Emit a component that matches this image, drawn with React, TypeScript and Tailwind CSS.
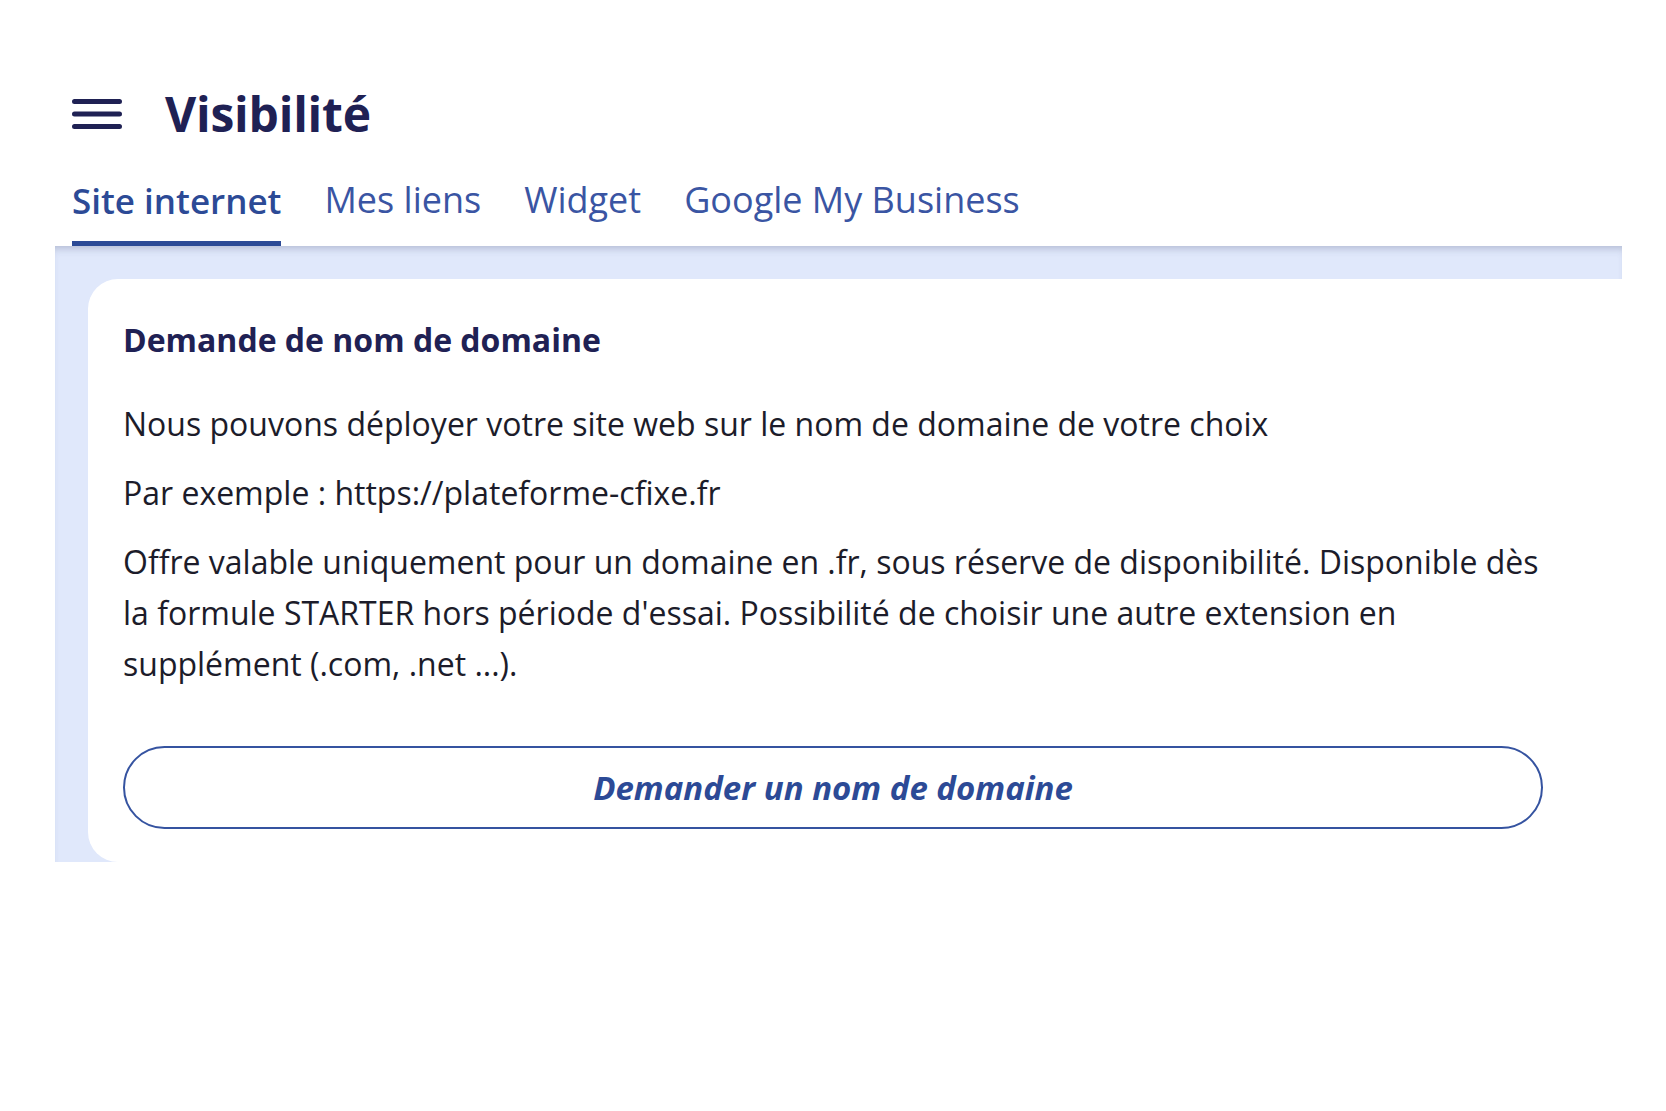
import { useState } from 'react';

const tabs = ['Site internet', 'Mes liens', 'Widget', 'Google My Business'];

function MenuIcon() {
  return (
    <svg width="50" height="32" viewBox="0 0 50 32" fill="none" aria-hidden="true">
      <path d="M2.5 3.5h45M2.5 16h45M2.5 28.5h45" stroke="#1f2154" strokeWidth="5" strokeLinecap="round" />
    </svg>
  );
}

export default function App() {
  const [active, setActive] = useState('Site internet');

  return (
    <div className="min-h-screen bg-white font-['Open_Sans',sans-serif]">
      <div className="pl-[55px] pr-[44px]">
        {/* Header */}
        <div className="flex items-center pl-[17px] pt-[81px] h-[147px]">
          <MenuIcon />
          <h1 className="ml-[43px] text-[48px] leading-none font-bold text-[#1f2154] tracking-[-0.2px]">Visibilité</h1>
        </div>

        {/* Tabs */}
        <div className="flex gap-[43px] pl-[17px] mt-[30px]">
          {tabs.map(tab => (
            <button
              key={tab}
              onClick={() => setActive(tab)}
              className={`leading-none pt-[5px] pb-[23px] border-b-[5px] ${
                active === tab
                  ? 'text-[35px] font-semibold text-[#2c4a96] border-[#2c4a96]'
                  : 'text-[36px] font-normal text-[#3a55a3] border-transparent'
              }`}
            >
              {tab}
            </button>
          ))}
        </div>

        {/* Panel */}
        <div className="bg-[#e0e8fb] pl-[33px] pt-[33px] shadow-[inset_0_7px_8px_-5px_rgba(60,70,110,0.3)]">
          <div className="bg-white rounded-l-[30px] pl-[35px] pr-[79px] pt-[41px] pb-[33px]">
            <h2 className="text-[32px] leading-[40px] font-bold text-[#1f2154]">Demande de nom de domaine</h2>

            <div className="mt-[38px] text-[32px] leading-[51px] text-[#1c1c2a] space-y-[18px]">
              <p>Nous pouvons déployer votre site web sur le nom de domaine de votre choix</p>
              <p>Par exemple : https://plateforme-cfixe.fr</p>
              <p>
                Offre valable uniquement pour un domaine en .fr, sous réserve de disponibilité. Disponible dès la
                formule STARTER hors période d'essai. Possibilité de choisir une autre extension en supplément (.com,
                .net ...).
              </p>
            </div>

            <button className="mt-[57px] w-full h-[83px] rounded-full border-2 border-[#3553a0] text-[33px] font-bold italic text-[#2c4a96]">
              Demander un nom de domaine
            </button>
          </div>
        </div>
      </div>
    </div>
  );
}
